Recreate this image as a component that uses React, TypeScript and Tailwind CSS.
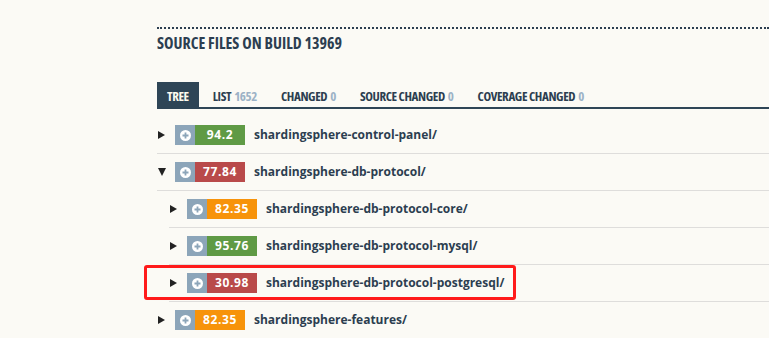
import React from "react";

type Node = {
  score: string;
  color: string;
  name: string;
  open?: boolean;
  highlight?: boolean;
  children?: Node[];
};

const tabs = [
  { label: "TREE", count: null, active: true },
  { label: "LIST", count: "1652" },
  { label: "CHANGED", count: "0" },
  { label: "SOURCE CHANGED", count: "0" },
  { label: "COVERAGE CHANGED", count: "0" },
];

const GREEN = "bg-[#5f9a45]";
const RED = "bg-[#b94a4a]";
const ORANGE = "bg-[#f7930a]";

const tree: Node[] = [
  { score: "94.2", color: GREEN, name: "shardingsphere-control-panel/" },
  {
    score: "77.84",
    color: RED,
    name: "shardingsphere-db-protocol/",
    open: true,
    children: [
      { score: "82.35", color: ORANGE, name: "shardingsphere-db-protocol-core/" },
      { score: "95.76", color: GREEN, name: "shardingsphere-db-protocol-mysql/" },
      {
        score: "30.98",
        color: RED,
        name: "shardingsphere-db-protocol-postgresql/",
        highlight: true,
      },
    ],
  },
  { score: "82.35", color: ORANGE, name: "shardingsphere-features/" },
];

// condensed heading face
const narrow = "font-['Open_Sans',sans-serif] font-stretch-condensed";

function Arrow({ open }: { open?: boolean }) {
  return open ? (
    <svg width="8" height="8" viewBox="0 0 8 8" className="shrink-0">
      <polygon points="0,0 8,0 4,8" fill="#222" />
    </svg>
  ) : (
    <svg width="7" height="8" viewBox="0 0 7 8" className="shrink-0">
      <polygon points="0,0 7,4 0,8" fill="#222" />
    </svg>
  );
}

function Badge({ score, color }: { score: string; color: string }) {
  return (
    <div className="flex h-[20px] shrink-0">
      <div className="w-[20px] bg-[#8ca5b9] flex items-center justify-center">
        <svg width="11" height="11" viewBox="0 0 11 11">
          <circle cx="5.5" cy="5.5" r="5.5" fill="#fff" />
          <path d="M5.5 2.5v6M2.5 5.5h6" stroke="#8ca5b9" strokeWidth="1.8" />
        </svg>
      </div>
      <div
        className={`w-[50px] ${color} flex items-center justify-center text-white text-[12px] font-bold tracking-[0.6px] font-['Open_Sans',sans-serif]`}
      >
        {score}
      </div>
    </div>
  );
}

function Row({ node }: { node: Node }) {
  return (
    <li>
      <div className="relative h-[37px] border-b border-[#dedddb] flex items-center pl-[1px]">
        <Arrow open={node.open} />
        <div className={node.open ? "ml-[9px]" : "ml-[10px]"}>
          <Badge score={node.score} color={node.color} />
        </div>
        <span className="ml-[9px] text-[12px] font-bold text-[#2c3e50] font-['Open_Sans',sans-serif]">
          {node.name}
        </span>
        {node.highlight && (
          <div className="absolute -left-[25px] top-0 w-[372px] h-[35px] border-[3px] border-[#ff1a1a] rounded-[3px]" />
        )}
      </div>
      {node.children && (
        <ul className="ml-[12px]">
          {node.children.map((c) => (
            <Row key={c.name} node={c} />
          ))}
        </ul>
      )}
    </li>
  );
}

export default function App() {
  return (
    <div className="min-h-screen h-[338px] overflow-hidden bg-[#fbfaf5] pl-[157px] pt-[27px]">
      <div className="border-t-2 border-dotted border-[#2c3e50]">
        <h2 className={`mt-[4px] text-[16px] leading-[20px] font-bold text-[#2c3e50] ${narrow}`}>
          SOURCE FILES ON BUILD 13969
        </h2>
      </div>

      <ul className="mt-[29px] flex gap-[4px] border-b-2 border-[#2e4556]">
        {tabs.map((t) => (
          <li
            key={t.label}
            className={`h-[25px] px-[10px] pt-[3px] leading-[22px] text-[13px] font-bold tracking-[-0.4px] ${narrow} ${
              t.active ? "bg-[#2e4556] text-[#fdfbee]" : "text-[#2c3e50]"
            }`}
          >
            {t.label}
            {t.count && <span className="ml-[3px] text-[#9cb2c6]">{t.count}</span>}
          </li>
        ))}
      </ul>

      <ul className="mt-[8px]">
        {tree.map((n) => (
          <Row key={n.name} node={n} />
        ))}
      </ul>
    </div>
  );
}
